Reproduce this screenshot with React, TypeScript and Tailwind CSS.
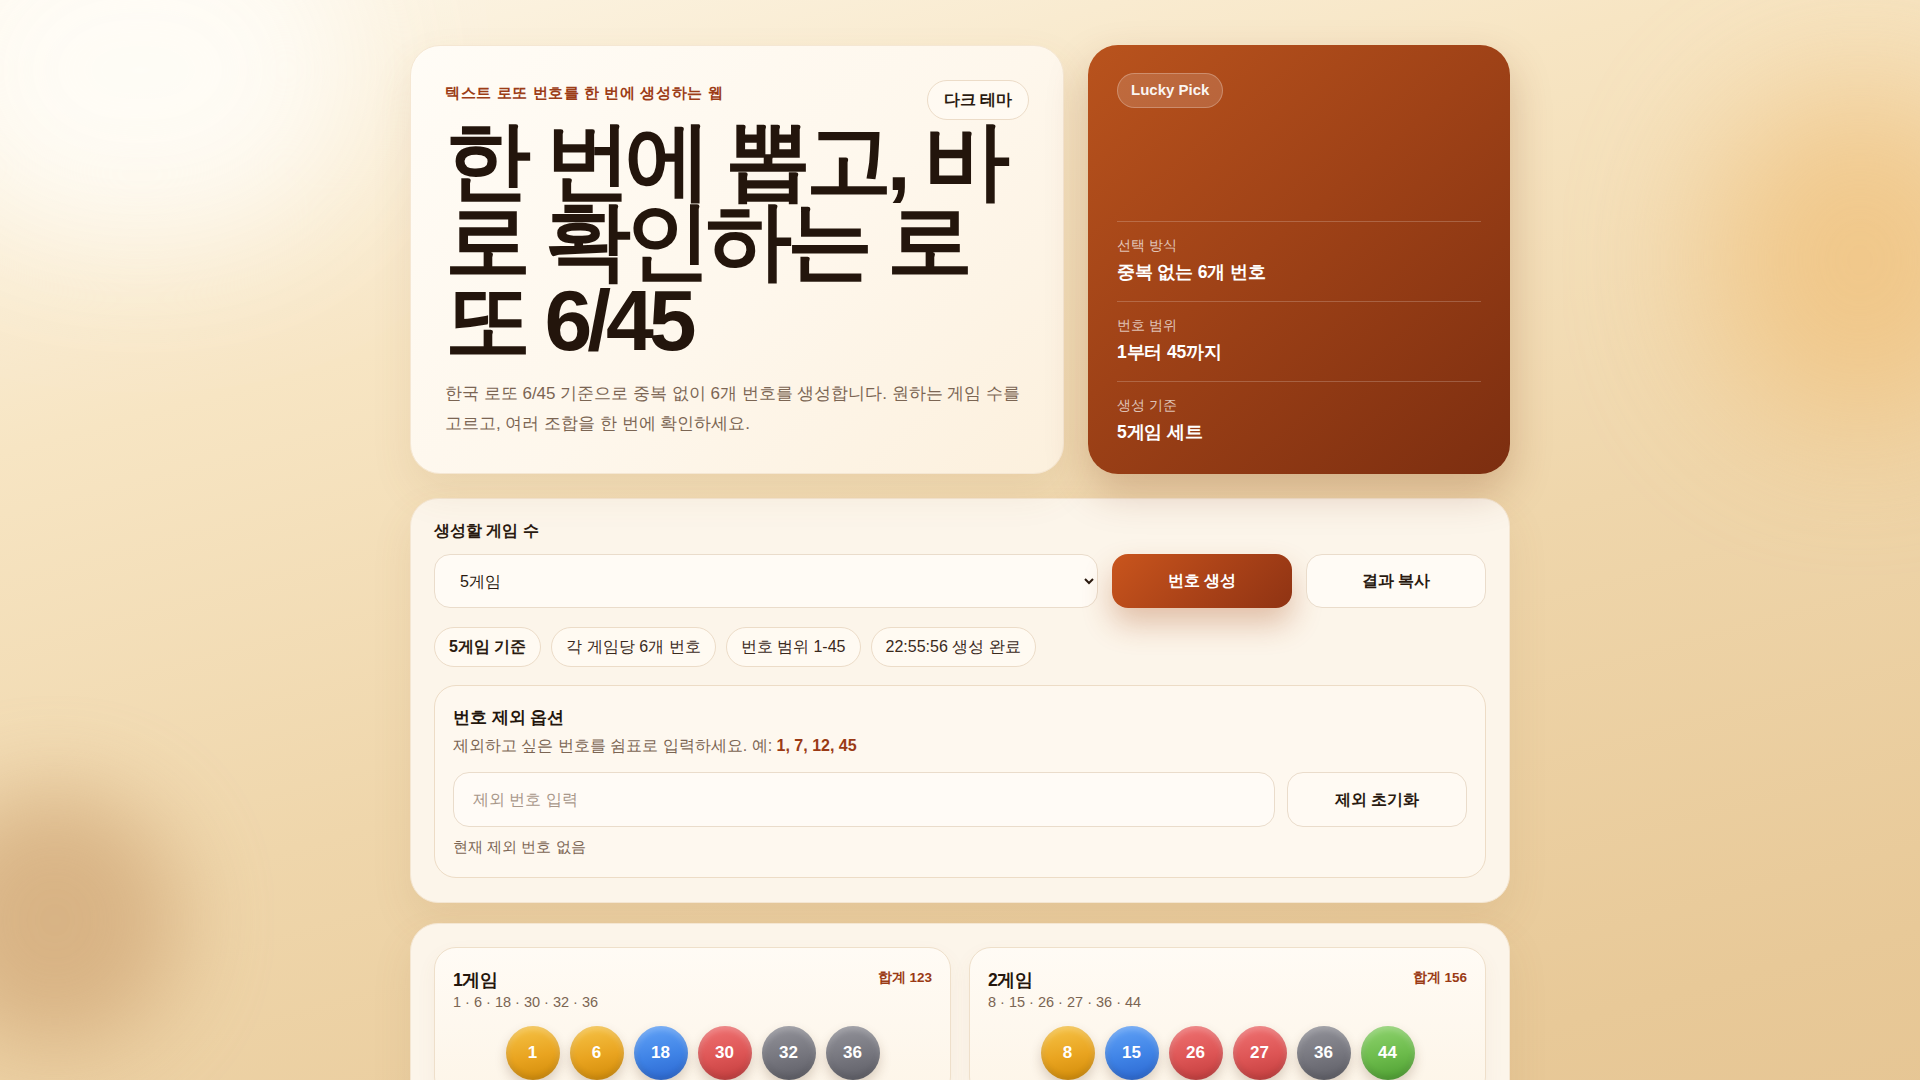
import React from "react";

type Game = { id: number; nums: number[] };

const games: Game[] = [
  { id: 1, nums: [1, 6, 18, 30, 32, 36] },
  { id: 2, nums: [8, 15, 26, 27, 36, 44] },
  { id: 3, nums: [3, 11, 19, 24, 38, 42] },
  { id: 4, nums: [5, 13, 22, 29, 33, 41] },
  { id: 5, nums: [7, 14, 20, 31, 37, 45] },
];

function ballClass(n: number): string {
  if (n <= 10) return "bg-[linear-gradient(170deg,#f6c448_0%,#e9a420_55%,#d08a08_100%)]";
  if (n <= 20) return "bg-[linear-gradient(170deg,#62a3f7_0%,#3f83e6_55%,#2b66cf_100%)]";
  if (n <= 30) return "bg-[linear-gradient(170deg,#f07373_0%,#dd5555_55%,#c13c3c_100%)]";
  if (n <= 40) return "bg-[linear-gradient(170deg,#94949b_0%,#76767e_55%,#5c5c64_100%)]";
  return "bg-[linear-gradient(170deg,#90d470_0%,#6cbb4b_55%,#4c9c31_100%)]";
}

function Ball({ n }: { n: number }) {
  return (
    <div
      className={`flex h-[54px] w-[54px] items-center justify-center rounded-full text-[17px] font-bold text-white shadow-[0_6px_12px_rgba(90,60,30,0.22),inset_0_-3px_6px_rgba(0,0,0,0.12),inset_0_3px_6px_rgba(255,255,255,0.25)] ${ballClass(n)}`}
    >
      {n}
    </div>
  );
}

function GameCard({ game }: { game: Game }) {
  const sum = game.nums.reduce((a, b) => a + b, 0);
  return (
    <div className="rounded-[22px] border border-[#eedfca] bg-[linear-gradient(180deg,#fffbf5_0%,#fdf5e8_100%)] px-[18px] pb-[18px] pt-[20px] shadow-[0_8px_20px_rgba(160,110,60,0.06)]">
      <div className="flex items-start justify-between">
        <div className="text-[17.5px] font-bold leading-[24px] tracking-[-0.02em] text-[#24160d]">
          {game.id}게임
        </div>
        <div className="text-[13.5px] font-bold leading-[20px] text-[#9a3a15]">합계 {sum}</div>
      </div>
      <div className="text-[14.5px] leading-[20px] text-[#7b6553]">{game.nums.join(" · ")}</div>
      <div className="mt-[14px] flex justify-center gap-[10px]">
        {game.nums.map((n) => (
          <Ball key={n} n={n} />
        ))}
      </div>
    </div>
  );
}

function InfoRow({ label, value, last }: { label: string; value: string; last?: boolean }) {
  return (
    <div className={`border-t border-white/20 pt-[13px] ${last ? "" : "pb-[15px]"}`}>
      <div className="text-[14.3px] leading-[21px] text-white/70">{label}</div>
      <div className="mt-[3px] text-[17.5px] font-bold leading-[27px] tracking-[-0.01em] text-white">{value}</div>
    </div>
  );
}

export default function App() {
  return (
    <div className="relative min-h-screen overflow-hidden bg-[linear-gradient(165deg,#fdf7ea_0%,#f7e5c3_22%,#efd6ab_45%,#e8c998_70%,#e2be8a_100%)] font-['Liberation_Sans',sans-serif]">
      {/* decorative blurred blobs */}
      <div className="pointer-events-none absolute left-[-80px] top-[-100px] h-[340px] w-[440px] rounded-full bg-[#fffdf8] opacity-90 blur-[70px]" />
      <div className="pointer-events-none absolute right-[-90px] top-[90px] h-[340px] w-[300px] rounded-full bg-[#f0bf78] opacity-70 blur-[70px]" />
      <div className="pointer-events-none absolute left-[-70px] top-[790px] h-[260px] w-[250px] rounded-full bg-[#cfa575] opacity-70 blur-[45px]" />

      <div className="relative mx-auto max-w-[1100px] pb-20 pt-[45px]">
        {/* hero */}
        <div className="grid grid-cols-[1.55fr_1fr] gap-6">
          <div className="rounded-[30px] border border-[#f5e7d3] bg-[linear-gradient(140deg,#fffcf6_0%,#fef7ec_55%,#fcf0dd_100%)] px-[34px] pb-[35px] pt-[34px] shadow-[0_18px_40px_rgba(150,100,50,0.10)]">
            <div className="flex items-start justify-between">
              <div className="text-[15px] font-bold leading-[26px] tracking-[0.04em] text-[#9c3d17]">
                텍스트 로또 번호를 한 번에 생성하는 웹
              </div>
              <button className="h-10 rounded-full border border-[#ecdcc8] bg-[#fffaf2] px-[16px] text-[16px] font-bold text-[#2a1a10]">
                다크 테마
              </button>
            </div>
            <h1 className="mt-0 text-[86px] font-bold leading-[80px] tracking-[-0.06em] text-[#23150c]">
              한 번에 뽑고, 바로 확인하는 로또 6/45
            </h1>
            <p className="mt-[19px] text-[17px] leading-[29.5px] text-[#7b6553]">
              한국 로또 6/45 기준으로 중복 없이 6개 번호를 생성합니다. 원하는 게임 수를 고르고, 여러 조합을 한 번에 확인하세요.
            </p>
          </div>

          <div className="flex flex-col justify-between rounded-[30px] bg-[linear-gradient(140deg,#b9531d_0%,#9f4217_45%,#7c2e10_100%)] px-[29px] py-7 shadow-[0_18px_40px_rgba(120,50,15,0.25)]">
            <div>
              <span className="inline-flex h-[35px] items-center rounded-full border border-white/25 bg-white/15 px-[13px] text-[15px] font-bold text-white/95">
                Lucky Pick
              </span>
            </div>
            <div>
              <InfoRow label="선택 방식" value="중복 없는 6개 번호" />
              <InfoRow label="번호 범위" value="1부터 45까지" />
              <InfoRow label="생성 기준" value="5게임 세트" last />
            </div>
          </div>
        </div>

        {/* controls */}
        <div className="mt-6 rounded-[28px] border border-[#f4e6d2] bg-[#fcf5ea] px-[23px] pb-[24px] pt-[22px] shadow-[0_18px_40px_rgba(150,100,50,0.10)]">
          <div className="text-[16px] font-bold leading-[20px] text-[#2a1a10]">생성할 게임 수</div>
          <div className="mt-[13px] grid grid-cols-[1fr_180px_180px] gap-[14px]">
            <select
              defaultValue="5게임"
              className="h-[54px] rounded-[16px] border border-[#eadccb] bg-[#fffbf5] pl-[21px] pr-[6px] text-[16px] text-[#2a1a10] outline-none"
            >
              <option>1게임</option>
              <option>3게임</option>
              <option>5게임</option>
              <option>10게임</option>
            </select>
            <button className="h-[54px] rounded-[16px] bg-[linear-gradient(135deg,#c9551d_0%,#ac4318_50%,#8f3313_100%)] text-[16px] font-bold text-white shadow-[0_16px_30px_rgba(170,80,30,0.32)]">
              번호 생성
            </button>
            <button className="h-[54px] rounded-[16px] border border-[#eadccb] bg-[#fffbf5] text-[16px] font-bold text-[#2a1a10]">
              결과 복사
            </button>
          </div>

          <div className="mt-[19px] flex flex-wrap gap-[10px]">
            <span className="rounded-full border border-[#ecdcc8] bg-[#fffaf2] px-[14px] py-[7px] text-[16px] font-bold leading-[24px] text-[#2a1a10]">
              5게임 기준
            </span>
            <span className="rounded-full border border-[#ecdcc8] bg-[#fffaf2] px-[14px] py-[7px] text-[16px] leading-[24px] text-[#3a291c]">
              각 게임당 6개 번호
            </span>
            <span className="rounded-full border border-[#ecdcc8] bg-[#fffaf2] px-[14px] py-[7px] text-[16px] leading-[24px] text-[#3a291c]">
              번호 범위 1-45
            </span>
            <span className="rounded-full border border-[#ecdcc8] bg-[#fffaf2] px-[14px] py-[7px] text-[16px] leading-[24px] text-[#3a291c]">
              22:55:56 생성 완료
            </span>
          </div>

          <div className="mt-[18px] rounded-[22px] border border-[#eddcc6] bg-[#fef8ef] px-[18px] pb-[19px] pt-[20px]">
            <div className="text-[17px] font-bold leading-[24px] text-[#24160d]">번호 제외 옵션</div>
            <div className="mt-[3px] text-[16px] leading-[25px] text-[#7b6553]">
              제외하고 싶은 번호를 쉼표로 입력하세요. 예: <span className="font-bold text-[#9a3a15]">1, 7, 12, 45</span>
            </div>
            <div className="mt-[14px] grid grid-cols-[1fr_180px] gap-[12px]">
              <input
                placeholder="제외 번호 입력"
                className="h-[55px] rounded-[16px] border border-[#eadccb] bg-[#fffbf6] px-[19px] text-[16px] text-[#2a1a10] outline-none placeholder:text-[#a8978a]"
              />
              <button className="h-[55px] rounded-[16px] border border-[#eadccb] bg-[#fffaf3] text-[16px] font-bold text-[#2a1a10]">
                제외 초기화
              </button>
            </div>
            <div className="mt-[9px] text-[15px] leading-[22px] text-[#7b6553]">현재 제외 번호 없음</div>
          </div>
        </div>

        {/* results */}
        <div className="mt-5 rounded-[28px] border border-[#f4e6d2] bg-[#fcf5ea] p-[23px] shadow-[0_18px_40px_rgba(150,100,50,0.10)]">
          <div className="grid grid-cols-2 gap-[18px]">
            {games.map((g) => (
              <GameCard key={g.id} game={g} />
            ))}
          </div>
        </div>
      </div>
    </div>
  );
}
